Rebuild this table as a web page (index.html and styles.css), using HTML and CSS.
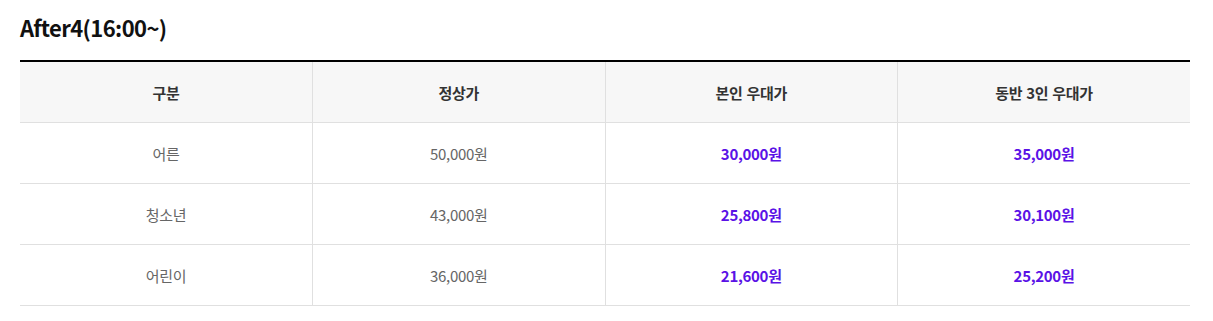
FILE: index.html
```html
<!DOCTYPE html>
<html lang="ko">
<head>
<meta charset="utf-8">
<link rel="stylesheet" href="styles.css">
</head>
<body>
<div class="wrap">
  <h2 class="title">After4(16:00~)</h2>
  <table class="price">
    <thead>
      <tr><th>구분</th><th>정상가</th><th>본인 우대가</th><th>동반 3인 우대가</th></tr>
    </thead>
    <tbody>
      <tr><td>어른</td><td>50,000원</td><td class="hl">30,000원</td><td class="hl">35,000원</td></tr>
      <tr><td>청소년</td><td>43,000원</td><td class="hl">25,800원</td><td class="hl">30,100원</td></tr>
      <tr><td>어린이</td><td>36,000원</td><td class="hl">21,600원</td><td class="hl">25,200원</td></tr>
    </tbody>
  </table>
</div>
</body>
</html>
```

FILE: styles.css
```css
html, body { margin: 0; padding: 0; background: #fff; }
body { font-family: "Noto Sans CJK KR", "Noto Sans", sans-serif; }
.wrap { padding: 8px 23px 0 20px; }
.title { margin: 0; font-size: 22px; font-weight: 700; color: #111; line-height: 38px; letter-spacing: -0.6px; font-feature-settings: "locl" 0; }
.price { margin-top: 14px; width: 100%; border-collapse: collapse; table-layout: fixed; border-top: 2px solid #000; }
.price th, .price td { text-align: center; border-bottom: 1px solid #e0e0e0; border-left: 1px solid #e0e0e0; height: 60px; padding: 0; font-size: 15px; letter-spacing: -0.3px; }
.price th:first-child, .price td:first-child { border-left: none; }
.price th { background: #f7f7f7; font-weight: 700; color: #333; }
.price td { color: #666; font-weight: 400; }
.price td.hl { color: #5a12e6; font-weight: 700; }
```
